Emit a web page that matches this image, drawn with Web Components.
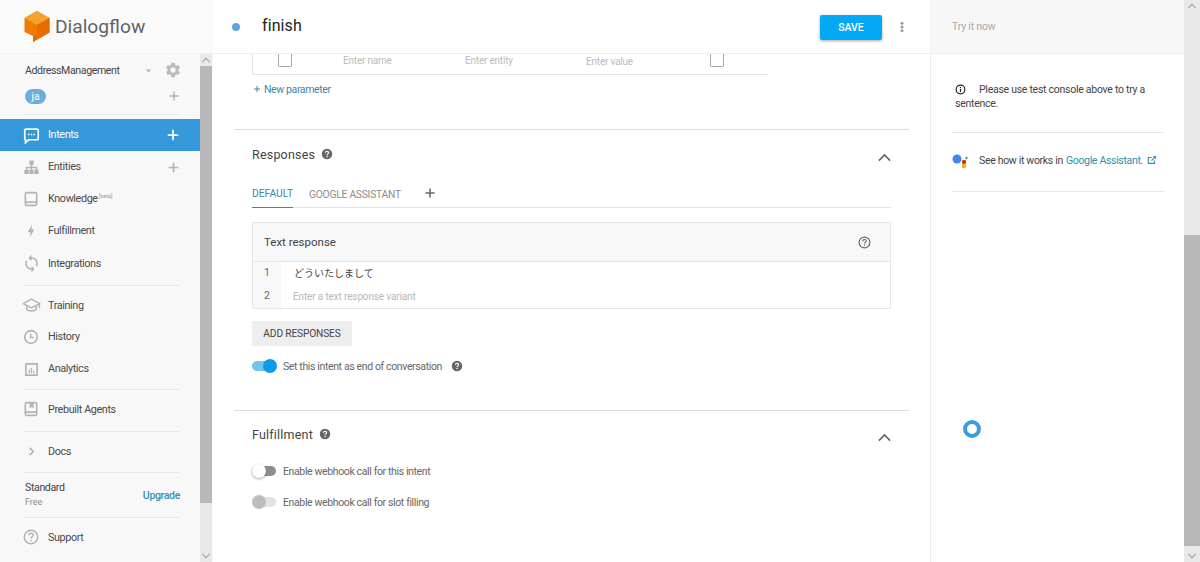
<!DOCTYPE html>
<html>
<head>
<meta charset="utf-8">
<style>
  html, body { margin: 0; height: 100%; overflow: hidden; background: #fff; }
  body { font-family: Roboto, "Noto Sans CJK JP", sans-serif; color: #444; }
</style>
</head>
<body>
<df-app></df-app>
<script>
const ICONS = {
  chat: '<path d="M4 3h16a1.5 1.5 0 0 1 1.500 1.500v12a1.500 1.500 0 0 1-1.500 1.500H8l-4.500 4V18A1.500 1.500 0 0 1 2.500 16.500v-12A1.500 1.500 0 0 1 4 3z" fill="none" stroke="currentColor" stroke-width="2.400"/><path d="M7 9.500h2.200v2.200H7zM10.900 9.500h2.200v2.200h-2.200zM14.800 9.500H17v2.200h-2.200z" fill="currentColor"/>',
  tree: '<path d="M9 2h6v6h-2v3h7v4h2v6h-6v-6h2v-2h-5v2h2v6H9v-6h2v-2H6v2h2v6H2v-6h2v-4h7V8H9z" fill="currentColor"/>',
  book: '<path d="M5.500 2.500h13a2 2 0 0 1 2 2v15a2 2 0 0 1-2 2h-13a2 2 0 0 1-2-2v-15a2 2 0 0 1 2-2z" fill="none" stroke="currentColor" stroke-width="2.400"/><path d="M4 15.500h16V18H4z" fill="currentColor"/>',
  bolt: '<path d="M13.500 2 7 14h4.500L10 22l7-12.500h-4.500z" fill="currentColor"/>',
  sync: '<path d="M12 4V1L8 5l4 4V6c3.310 0 6 2.690 6 6 0 1.010-.25 1.970-.7 2.800l1.460 1.460C19.540 15.030 20 13.570 20 12c0-4.420-3.580-8-8-8zm0 14c-3.310 0-6-2.690-6-6 0-1.010.25-1.970.7-2.800L5.240 7.740C4.460 8.970 4 10.430 4 12c0 4.420 3.580 8 8 8v3l4-4-4-4v3z" fill="currentColor"/>',
  school: '<path d="M1.500 9.500 12 4l10.500 5.500L12 15z" fill="none" stroke="currentColor" stroke-width="1.800" stroke-linejoin="round"/><path d="M6 12.500V17c2 2.500 10 2.500 12 0v-4.500M22 9.500V15" fill="none" stroke="currentColor" stroke-width="1.800"/>',
  clock: '<circle cx="12" cy="12" r="9.500" fill="none" stroke="currentColor" stroke-width="2.400"/><path d="M11.500 7v5.800H16" fill="none" stroke="currentColor" stroke-width="2.200"/>',
  chart: '<path d="M3 3h18v18H3z" fill="none" stroke="currentColor" stroke-width="2.600"/><path d="M7.500 12.500h2V18h-2zM11 9h2v9h-2zM14.500 14h2v4h-2z" fill="currentColor"/>',
  agent: '<path d="M5.500 2.500h13a2 2 0 0 1 2 2v15a2 2 0 0 1-2 2h-13a2 2 0 0 1-2-2v-15a2 2 0 0 1 2-2z" fill="none" stroke="currentColor" stroke-width="2.400"/><path d="M4 15.500h16V18H4zM10 3h6v8l-3-2-3 2z" fill="currentColor"/>',
  next: '<path d="M8 4l8 8-8 8" fill="none" stroke="currentColor" stroke-width="3.400"/>',
  help: '<circle cx="12" cy="12" r="10" fill="none" stroke="currentColor" stroke-width="2.200"/><path d="M8.800 9.500C8.800 7.600 10.200 6.500 12 6.500s3.200 1.100 3.200 2.800c0 2.400-3.200 2.500-3.200 5" fill="none" stroke="currentColor" stroke-width="2.200"/><path d="M10.900 16h2.200v2.200h-2.200z" fill="currentColor"/>',
  helpfill: '<path fill-rule="evenodd" d="M12 1.500a10.500 10.500 0 1 1 0 21 10.500 10.500 0 0 1 0-21zM11 16v2.400h2.400V16zM12 5.500c-2.500 0-4.200 1.600-4.200 3.900h2.300c0-1.100.8-1.800 1.900-1.800s1.900.7 1.900 1.700c0 1.900-3 2-3 5.200h2.400c0-2.300 3-2.600 3-5.400 0-2.200-1.800-3.600-4.300-3.600z" fill="currentColor"/>',
  info: '<circle cx="12" cy="12" r="9.500" fill="none" stroke="currentColor" stroke-width="2.600"/><path d="M10.700 6.500h2.600v2.600h-2.600zM10.700 10.800h2.600v6.700h-2.600z" fill="currentColor"/>',
  gear: '<path d="M19.140 12.940c.04-.3.06-.61.06-.94 0-.32-.02-.64-.07-.94l2.030-1.580a.49.49 0 0 0 .12-.61l-1.920-3.320a.488.488 0 0 0-.59-.22l-2.390.96c-.5-.38-1.030-.7-1.620-.94l-.36-2.540a.484.484 0 0 0-.48-.41h-3.840c-.24 0-.43.17-.47.41l-.36 2.540c-.59.24-1.130.57-1.620.94l-2.390-.96c-.22-.08-.47 0-.59.22L2.740 8.870c-.12.21-.08.47.12.61l2.030 1.580c-.05.3-.09.63-.09.94s.02.64.07.94l-2.030 1.580a.49.49 0 0 0-.12.61l1.920 3.320c.12.22.37.29.59.22l2.390-.96c.5.38 1.030.7 1.620.94l.36 2.540c.05.24.24.41.48.41h3.840c.24 0 .44-.17.47-.41l.36-2.540c.59-.24 1.130-.56 1.620-.94l2.390.96c.22.08.47 0 .59-.22l1.920-3.320c.12-.22.07-.47-.12-.61l-2.010-1.580zM12 15.600c-1.980 0-3.600-1.620-3.600-3.600s1.620-3.600 3.600-3.600 3.600 1.620 3.600 3.600-1.620 3.600-3.600 3.600z" fill="currentColor"/>',
  plus: '<path d="M10.500 3h3v7.500H21v3h-7.500V21h-3v-7.500H3v-3h7.500z" fill="currentColor"/>',
  up: '<path d="M3 17 12 8l9 9" fill="none" stroke="currentColor" stroke-width="2.600"/>',
  caret: '<path d="M5 9h14l-7 8z" fill="currentColor"/>',
  more: '<circle cx="12" cy="4.500" r="3" fill="currentColor"/><circle cx="12" cy="12" r="3" fill="currentColor"/><circle cx="12" cy="19.500" r="3" fill="currentColor"/>',
  open: '<path d="M18 13v7H3V6h8" fill="none" stroke="currentColor" stroke-width="2.600"/><path d="M14 2.500h7.500V10l-2.700-2.700-7 7-2-2 7-7z" fill="currentColor"/>'
};

customElements.define('df-icon', class extends HTMLElement {
  connectedCallback() {
    const size = this.getAttribute('size') || 16;
    const root = this.shadowRoot || this.attachShadow({ mode: 'open' });
    root.innerHTML = `
      <style>
        :host { display: inline-flex; flex: none; width: ${size}px; height: ${size}px; color: var(--icon, #b0b3b8); }
        svg { width: 100%; height: 100%; display: block; }
      </style>
      <svg viewBox="0 0 24 24">${ICONS[this.getAttribute('name')] || ''}</svg>`;
  }
});

customElements.define('df-scrollbar', class extends HTMLElement {
  connectedCallback() {
    const root = this.attachShadow({ mode: 'open' });
    const top = this.getAttribute('gap');
    const h = this.getAttribute('thumb');
    root.innerHTML = `
      <style>
        :host { display: flex; flex-direction: column; flex: none; background: #e9e9e9; }
        .arrow { height: 12px; display: flex; align-items: center; justify-content: center; --icon: #a3a3a3; }
        .track { flex: 1; }
        .thumb { margin-top: ${top}px; height: ${h}px; background: #b8b8b8; }
        .down { transform: rotate(180deg); }
      </style>
      <div class="arrow"><df-icon name="up" size="10"></df-icon></div>
      <div class="track"><div class="thumb"></div></div>
      <div class="arrow down"><df-icon name="up" size="10"></df-icon></div>`;
  }
});

customElements.define('df-nav-item', class extends HTMLElement {
  connectedCallback() {
    const root = this.attachShadow({ mode: 'open' });
    const active = this.hasAttribute('active');
    const add = this.hasAttribute('add');
    root.innerHTML = `
      <style>
        :host { display: flex; align-items: center; height: 32px; padding: 0 20px 0 23px; font-size: 10.800px; letter-spacing: -.38px; color: #4a4a4a; }
        :host([active]) { background: #3498db; color: #fff; --icon: #fff; }
        .ic { width: 16px; display: flex; justify-content: center; }
        .lb { margin: -2px 0 0 9px; flex: 1; white-space: nowrap; }
        :host([low]) .lb { margin-top: 0; }
        sup { font-size: 5.500px; color: #999; vertical-align: 4px; margin-left: 1px; letter-spacing: 0; }
      </style>
      <span class="ic"><df-icon name="${this.getAttribute('icon')}" size="${this.getAttribute('size') || 16}"></df-icon></span>
      <span class="lb"><slot></slot>${this.hasAttribute('beta') ? '<sup>[beta]</sup>' : ''}</span>
      ${add ? `<df-icon name="plus" size="${active ? 14 : 13}"></df-icon>` : ''}`;
  }
});

customElements.define('df-sidebar', class extends HTMLElement {
  connectedCallback() {
    this.attachShadow({ mode: 'open' }).innerHTML = `
      <style>
        :host { display: flex; flex-direction: column; background: #f8f8f8; height: 562px; overflow: hidden; }
        .brand { height: 53px; flex: none; display: flex; align-items: center; padding-left: 24px; gap: 5px; border-bottom: 1px solid #eee; background: #fafafa; box-sizing: content-box; }
        .brand span { font-size: 19.200px; color: #5f6368; }
        .body { flex: 1; display: flex; min-height: 0; }
        .nav { flex: 1; min-width: 0; }
        df-scrollbar { width: 12px; margin-right: 1px; }
        .agent { display: flex; align-items: center; height: 20px; margin-top: 6px; padding: 0 18px 0 25px; font-size: 10.600px; letter-spacing: -.4px; color: #444; }
        .agent .name { flex: 1; }
        .agent df-icon:first-of-type { margin-right: 11px; }
        .agent df-icon:last-of-type { --icon: #bbb; }
        .lang { display: flex; align-items: center; justify-content: space-between; height: 20px; margin-top: 6px; padding: 0 20px 0 25px; }
        .chip { width: 21px; height: 15px; border-radius: 8px; background: #6aaede; color: #fff; font-size: 10.500px; display: flex; align-items: center; justify-content: center; }
        hr { border: 0; height: 1px; background: #e8e8e8; margin: 0 21px 0 24px; }
        .top-rule { margin-top: 8px; margin-bottom: 4px; }
        .r1 { margin-top: 6px; margin-bottom: 3px; }
        .r2 { margin-top: 4px; margin-bottom: 3px; }
        .r3 { margin-top: 6px; margin-bottom: 3px; }
        .r4 { margin-top: 5px; }
        .r5 { margin-bottom: 3px; }
        .plan { display: flex; align-items: center; justify-content: space-between; height: 44px; padding: 0 20px 0 25px; font-size: 10.600px; letter-spacing: -.38px; }
        .plan span { margin-top: -2px; }
        .plan small { display: block; font-size: 9px; letter-spacing: 0; color: #8c8c8c; margin-top: 3px; }
        .plan b { font-weight: 500; color: #3a8fb0; }
      </style>
      <div class="brand">
        <svg width="26" height="32" viewBox="0 0 26 32"><path d="M13 0 25.500 7v14.500L9 31v-6L.500 21V7z" fill="#ef7c00"/><path d="M13 0 25.500 7 13 14 .500 7z" fill="#f9a12e"/><path d="M13 14 25.500 7v14.500L9 31v-6l4-2z" fill="#e96c00"/></svg>
        <span>Dialogflow</span>
      </div>
      <div class="body">
        <div class="nav">
          <div class="agent"><span class="name">AddressManagement</span><df-icon name="caret" size="9"></df-icon><df-icon name="gear" size="18"></df-icon></div>
          <div class="lang"><span class="chip">ja</span><df-icon name="plus" size="12"></df-icon></div>
          <hr class="top-rule">
          <df-nav-item icon="chat" size="17" active add>Intents</df-nav-item>
          <df-nav-item icon="tree" size="17" add>Entities</df-nav-item>
          <df-nav-item icon="book" size="16" beta>Knowledge</df-nav-item>
          <df-nav-item icon="bolt" size="16">Fulfillment</df-nav-item>
          <df-nav-item icon="sync" size="19" low>Integrations</df-nav-item>
          <hr class="r1">
          <df-nav-item icon="school" size="19" low>Training</df-nav-item>
          <df-nav-item icon="clock" size="16">History</df-nav-item>
          <df-nav-item icon="chart" size="15">Analytics</df-nav-item>
          <hr class="r2">
          <df-nav-item icon="agent" size="16" low>Prebuilt Agents</df-nav-item>
          <hr class="r3">
          <df-nav-item icon="next" size="11" low>Docs</df-nav-item>
          <hr class="r4">
          <div class="plan"><span>Standard<small>Free</small></span><b>Upgrade</b></div>
          <hr class="r5">
          <df-nav-item icon="help" size="16" low>Support</df-nav-item>
        </div>
        <df-scrollbar gap="0" thumb="437"></df-scrollbar>
      </div>`;
  }
});

customElements.define('df-topbar', class extends HTMLElement {
  connectedCallback() {
    this.attachShadow({ mode: 'open' }).innerHTML = `
      <style>
        :host { display: flex; align-items: center; flex: none; height: 53px; border-bottom: 1px solid #eee; padding: 0 22px 0 19px; box-sizing: content-box; background: #fff; }
        .dot { width: 8px; height: 8px; border-radius: 50%; background: #5fa8dc; margin-right: 22px; }
        .title { flex: 1; font-size: 16px; color: #222; letter-spacing: .1px; margin-top: -3px; }
        .save { width: 62px; height: 25px; background: #03a9f4; color: #fff; font-size: 10.500px; display: flex; align-items: center; justify-content: center; border-radius: 2px; box-shadow: 0 1px 3px rgba(0,0,0,.35); margin-right: 14px; margin-top: 2px; font-weight: 500; }
        df-icon { --icon: #9a9a9a; }
      </style>
      <span class="dot"></span><span class="title">finish</span>
      <span class="save">SAVE</span><df-icon name="more" size="12"></df-icon>`;
  }
});

customElements.define('df-toggle', class extends HTMLElement {
  connectedCallback() {
    this.attachShadow({ mode: 'open' }).innerHTML = `
      <style>
        :host { display: flex; align-items: center; font-size: 10.500px; letter-spacing: -.37px; color: #666; height: 16px; }
        .t { position: relative; width: 24px; height: 10px; border-radius: 5px; background: #e2e2e2; margin: 0 7px 0 0; flex: none; }
        .k { position: absolute; top: -2px; left: 0; width: 14px; height: 14px; border-radius: 50%; background: #bdbdbd; }
        :host([state="on"]) .t { background: #6fc4f0; }
        :host([state="on"]) .k { left: 11px; background: #0b9be8; }
        :host([state="off"]) .t { background: #8f8f8f; }
        :host([state="off"]) .k { background: #fff; box-shadow: 0 1px 3px rgba(0,0,0,.35); }
        df-icon { --icon: #666; margin-left: 9px; }
      </style>
      <span class="t"><span class="k"></span></span><slot></slot>
      ${this.hasAttribute('help') ? '<df-icon name="helpfill" size="12"></df-icon>' : ''}`;
  }
});

customElements.define('df-section', class extends HTMLElement {
  connectedCallback() {
    this.attachShadow({ mode: 'open' }).innerHTML = `
      <style>
        :host { display: block; border-top: 1px solid #ddd; margin: 0 21px; padding: 0 18px; }
        .head { display: flex; align-items: center; font-size: 12.500px; color: #444; letter-spacing: .2px; height: 18px; margin-top: 14px; }
        .head df-icon:first-of-type { --icon: #666; margin-left: 6px; }
        .chev { margin-left: auto; margin-right: -1px; --icon: #666; position: relative; top: 3px; }
      </style>
      <div class="head"><span>${this.getAttribute('heading')}</span><df-icon name="helpfill" size="12"></df-icon><df-icon class="chev" name="up" size="15"></df-icon></div>
      <slot></slot>`;
  }
});

customElements.define('df-response-card', class extends HTMLElement {
  connectedCallback() {
    this.attachShadow({ mode: 'open' }).innerHTML = `
      <style>
        :host { display: block; border: 1px solid #e6e6e6; margin-top: 14px; }
        .h { height: 38px; background: #f8f8f8; border-bottom: 1px solid #e6e6e6; display: flex; align-items: center; justify-content: space-between; padding: 0 19px 0 11px; font-size: 11.500px; color: #444; }
        df-icon { --icon: #666; }
        .row { display: flex; height: 23px; align-items: center; font-size: 10px; }
        .n { width: 28px; height: 100%; background: #f8f8f8; color: #666; padding: 0 0 3px 11px; box-sizing: border-box; display: flex; align-items: center; font-size: 10.500px; }
        .v { margin: -2px 0 0 13px; color: #444; }
        .p { margin: -1px 0 0 12px; color: #b8b8b8; letter-spacing: -.14px; }
      </style>
      <div class="h"><span>Text response</span><df-icon name="help" size="13"></df-icon></div>
      <div class="row"><span class="n">1</span><span class="v">どういたしまして</span></div>
      <div class="row"><span class="n">2</span><span class="p">Enter a text response variant</span></div>`;
  }
});

customElements.define('df-main', class extends HTMLElement {
  connectedCallback() {
    this.attachShadow({ mode: 'open' }).innerHTML = `
      <style>
        :host { display: flex; flex-direction: column; height: 562px; overflow: hidden; border-right: 1px solid #eee; box-sizing: border-box; }
        .params { margin: 0 0 0 39px; width: 516px; height: 21px; border-left: 1px solid #e2e2e2; border-bottom: 1px solid #e2e2e2; box-sizing: border-box; display: flex; font-size: 10px; letter-spacing: -.2px; color: #bbb; align-items: flex-start; }
        .cb { width: 14px; height: 13px; border: 1px solid #aaa; border-top: 0; border-radius: 0 0 2px 2px; box-sizing: border-box; flex: none; }
        .params span { position: relative; top: 1px; }
        .params .cb { top: 0; }
        .new { display: flex; align-items: center; gap: 3px; margin: 7px 0 0 40px; height: 14px; font-size: 10.500px; letter-spacing: -.38px; color: #3a87a8; --icon: #3a87a8; }
        df-section.first { margin-top: 33px; padding-top: 1px; }
        .tabs { display: flex; align-items: center; height: 26px; margin-top: 18px; border-bottom: 1px solid #e4e4e4; font-size: 10.300px; letter-spacing: -.25px; color: #8c8c8c; }
        .tabs .on { color: #3a87a8; border-bottom: 1px solid #3a87a8; height: 26px; line-height: 26px; width: 41px; margin-bottom: -1px; margin-right: 16px; white-space: nowrap; letter-spacing: 0; }
        .tabs df-icon { --icon: #666; margin: -3px 0 0 23px; }
        .btn { width: 100px; height: 25px; background: #eee; margin-top: 12px; display: flex; align-items: center; justify-content: center; font-size: 10.200px; letter-spacing: -.15px; color: #444; }
        .end { margin-top: 12px; margin-bottom: 36px; }
        .sw1 { margin-top: 20px; }
        .sw2 { margin-top: 15px; }
      </style>
      <df-topbar></df-topbar>
      <div class="params">
        <span class="cb" style="margin-left:25px"></span>
        <span style="margin-left:51px;width:122px">Enter name</span>
        <span style="width:121px">Enter entity</span>
        <span style="width:124px;top:2px">Enter value</span>
        <span class="cb"></span>
      </div>
      <div class="new"><df-icon name="plus" size="8"></df-icon>New parameter</div>
      <df-section class="first" heading="Responses">
        <div class="tabs"><span class="on">DEFAULT</span><span>GOOGLE ASSISTANT</span><df-icon name="plus" size="12"></df-icon></div>
        <df-response-card></df-response-card>
        <div class="btn">ADD RESPONSES</div>
        <df-toggle class="end" state="on" help>Set this intent as end of conversation</df-toggle>
      </df-section>
      <df-section heading="Fulfillment">
        <df-toggle class="sw1" state="off">Enable webhook call for this intent</df-toggle>
        <df-toggle class="sw2" state="none">Enable webhook call for slot filling</df-toggle>
      </df-section>`;
  }
});

customElements.define('df-try-panel', class extends HTMLElement {
  connectedCallback() {
    this.attachShadow({ mode: 'open' }).innerHTML = `
      <style>
        :host { display: flex; height: 562px; position: relative; }
        .col { flex: 1; min-width: 0; }
        .top { height: 53px; background: #f7f7f7; border-bottom: 1px solid #eee; display: flex; align-items: center; padding-left: 21px; font-size: 10.500px; letter-spacing: -.2px; color: #aaa; }
        df-scrollbar { width: 16px; }
        .info { margin: 29px 20px 0 24px; font-size: 10.500px; letter-spacing: -.27px; line-height: 14px; color: #444; height: 49px; }
        .info df-icon { --icon: #222; vertical-align: -2px; margin-right: 13px; }
        hr { border: 0; height: 1px; background: #e6e6e6; margin: 0 20px 0 21px; }
        .ga { display: flex; align-items: center; height: 54px; padding: 0 0 4px 21px; font-size: 10.500px; letter-spacing: -.32px; color: #444; white-space: nowrap; }
        .ga svg { margin: 2px 10px 0 0; flex: none; }
        a { color: #2c8fae; margin-left: 3px; }
        .ga df-icon { --icon: #2c8fae; margin-left: 4px; }
        .spin { position: absolute; left: 32px; top: 420px; width: 18px; height: 18px; border-radius: 50%; border: 4px solid #3d9be0; box-sizing: border-box; }
      </style>
      <div class="col">
        <div class="top">Try it now</div>
        <div class="info"><df-icon name="info" size="11"></df-icon>Please use test console above to try a sentence.</div>
        <hr>
        <div class="ga">
          <svg width="17" height="16" viewBox="0 0 17 16"><circle cx="5" cy="6" r="4.500" fill="#4285f4"/><circle cx="12" cy="9" r="2.200" fill="#c9372c"/><circle cx="12" cy="13" r="2.300" fill="#f4b400"/><circle cx="14.500" cy="5" r="1.200" fill="#34a853"/></svg>
          See how it works in<a>Google Assistant.</a><df-icon name="open" size="10"></df-icon>
        </div>
        <hr>
      </div>
      <df-scrollbar gap="223" thumb="311"></df-scrollbar>
      <span class="spin"></span>`;
  }
});

customElements.define('df-app', class extends HTMLElement {
  connectedCallback() {
    this.attachShadow({ mode: 'open' }).innerHTML = `
      <style>
        :host { display: grid; grid-template-columns: 213px 718px 269px; height: 562px; overflow: hidden; }
      </style>
      <df-sidebar></df-sidebar><df-main></df-main><df-try-panel></df-try-panel>`;
  }
});
</script>
</body>
</html>
